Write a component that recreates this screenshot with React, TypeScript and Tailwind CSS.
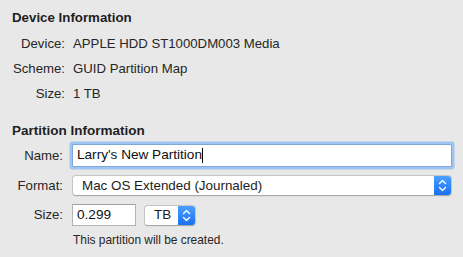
import React from "react";

function Chevrons() {
  return (
    <svg width="9" height="13" viewBox="0 0 9 13" fill="none">
      <path d="M1.5 4.5 L4.5 1.5 L7.5 4.5" stroke="white" strokeWidth="1.4" strokeLinecap="round" strokeLinejoin="round" />
      <path d="M1.5 8.5 L4.5 11.5 L7.5 8.5" stroke="white" strokeWidth="1.4" strokeLinecap="round" strokeLinejoin="round" />
    </svg>
  );
}

function Popup({ label, width }: { label: string; width: string }) {
  return (
    <div
      className={`${width} h-[21px] flex rounded-[4px] bg-white border border-[#c4c4c4] border-b-[#a9a9a9] shadow-[0_0.5px_0.5px_rgba(0,0,0,0.08)] overflow-hidden`}
    >
      <div className="flex-1 flex items-center pl-[9px] text-[13.4px] text-[#1c1c1c] leading-none">{label}</div>
      <div className="w-[17px] flex items-center justify-center bg-gradient-to-b from-[#4aa0ff] to-[#1a6ff2]">
        <Chevrons />
      </div>
    </div>
  );
}

export default function App() {
  const font = { fontFamily: '"Liberation Sans", Arial, sans-serif' };
  return (
    <div className="w-[463px] h-[257px] bg-[#e8e8e8] overflow-hidden" style={font}>
      <div className="pl-[12px] pt-[9px]">
        <div className="h-[17px] leading-[17px] text-[13.3px] font-bold text-[#1f1f1f]">Device Information</div>
        <div className="mt-[5px] text-[13.2px] text-[#262626]">
          {[
            ["Device:", "APPLE HDD ST1000DM003 Media"],
            ["Scheme:", "GUID Partition Map"],
            ["Size:", "1 TB"],
          ].map(([k, v]) => (
            <div key={k} className="h-[25px] flex items-center">
              <div className="w-[53px] text-right">{k}</div>
              <div className="ml-[8px]">{v}</div>
            </div>
          ))}
        </div>
      </div>

      <div className="pl-[12px] mt-[16px]">
        <div className="h-[17px] leading-[17px] text-[13.5px] font-bold text-[#1f1f1f]">Partition Information</div>
      </div>

      <div className="text-[13.2px] text-[#262626]">
        <div className="mt-[5px] h-[23px] flex items-center">
          <div className="w-[63px] text-right">Name:</div>
          <div className="ml-[9px] w-[380px] h-[23px] bg-white border border-[#7ea6d9] rounded-[1px] shadow-[0_0_0_2.5px_#9fc4f2] flex items-center pl-[4px] text-[13.6px] text-[#111]">
            <span>Larry's New Partition</span>
            <span className="w-[1px] h-[15px] bg-black ml-[0.5px]" />
          </div>
        </div>

        <div className="mt-[8px] h-[21px] flex items-center">
          <div className="w-[63px] text-right">Format:</div>
          <div className="ml-[9px]">
            <Popup label="Mac OS Extended (Journaled)" width="w-[380px]" />
          </div>
        </div>

        <div className="mt-[8px] h-[22px] flex items-center">
          <div className="w-[63px] text-right">Size:</div>
          <div className="ml-[9px] w-[64px] h-[22px] bg-white border border-[#b5b5b5] border-t-[#a0a0a0] flex items-center pl-[4px] text-[13.6px] text-[#111]">
            0.299
          </div>
          <div className="ml-[8px]">
            <Popup label="TB" width="w-[52px]" />
          </div>
        </div>

        <div className="mt-[7px] pl-[73px] h-[14px] leading-[14px] text-[11.9px] text-[#262626]">
          This partition will be created.
        </div>
      </div>
    </div>
  );
}
